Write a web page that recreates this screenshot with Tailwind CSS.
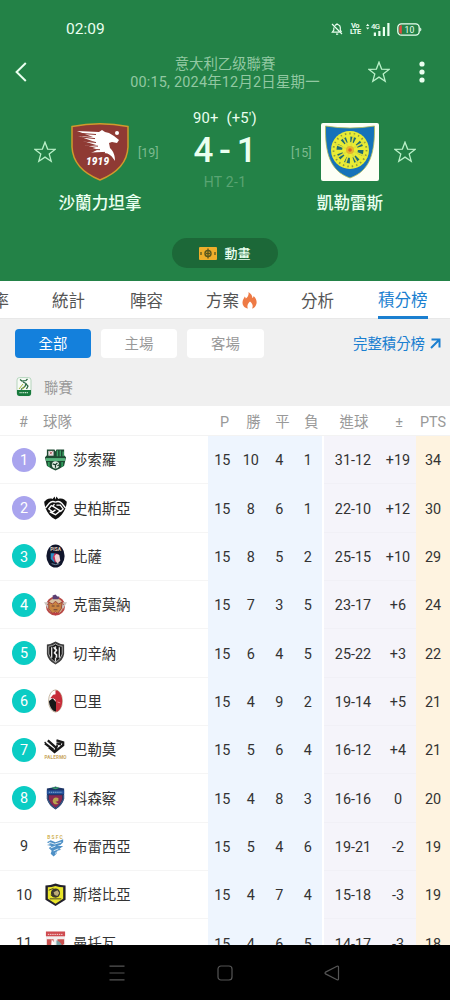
<!DOCTYPE html>
<html lang="zh-Hant">
<head>
    <meta charset="UTF-8">
    <meta name="viewport" content="width=device-width, initial-scale=1.0">
    <title>積分榜</title>
    <script src="https://cdn.jsdelivr.net/npm/@tailwindcss/browser@4"></script>
</head>
<body class="w-[450px] h-[1000px] overflow-hidden flex flex-col bg-white text-[#333] font-[Roboto,'Noto_Sans_CJK_TC',sans-serif]">

    <!-- Match header -->
    <header class="h-[281px] shrink-0 bg-[#238247] text-[#eafff0] flex flex-col">
        <div class="h-[58px] shrink-0 flex items-center pl-[66px] pr-[28px]">
            <span class="text-[15.5px] leading-none pt-0.5">02:09</span>
            <div class="ml-auto flex items-center">
                <svg class="w-3 h-3.5 mr-[7px]" viewBox="0 0 12 14" fill="none" stroke="currentColor" stroke-width="1.2">
                    <path d="M4 3.6A3 3 0 0 1 9.3 5.6V8l1.2 2M2.8 5.4V8L1.3 10.2H8.5M5 12.2h2.2M6 1.2v1.3M1 2l10 10"/>
                </svg>
                <div class="w-[10px] mr-1.5 text-[7.5px] leading-[6.5px] font-bold text-center tracking-tighter"><div>Vo</div><div>LTE</div></div>
                <svg class="w-[24px] h-[13px] mr-[7px]" viewBox="0 0 24 13" fill="currentColor">
                    <path d="M0 3l1.7-2.3L3.4 3zM0 4.5h3.4L1.7 6.6z"/>
                    <text x="5" y="6.4" font-size="7.8" font-weight="500" textLength="9">4G</text>
                    <path d="M7.8 9.5h2.2v3.5H7.8zM12.3 8h2.2v5h-2.2zM16.8 4h2.2v9h-2.2zM21.3 0h2.2v13h-2.2z"/>
                </svg>
                <svg class="w-[25px] h-[13px]" viewBox="0 0 25 13">
                    <rect x=".8" y=".8" width="21.4" height="11.4" rx="3.6" fill="none" stroke="currentColor" stroke-width="1.3"/>
                    <path d="M4.8 2.2v8.6h-.6a2 2 0 0 1-2-2V4.2a2 2 0 0 1 2-2z" fill="#e0483e"/>
                    <path d="M23.2 4.500c1.6.6 1.6 3.400 0 4z" fill="currentColor"/>
                    <text x="7.6" y="9.600" font-size="8.600" fill="currentColor">10</text>
                </svg>
            </div>
        </div>

        <div class="h-[28px] shrink-0 flex items-center px-[15px]">
            <svg class="w-3 h-5" viewBox="0 0 12 20" fill="none" stroke="currentColor" stroke-width="2"><path d="M10.8 1L1.6 10l9.200 9"/></svg>
            <div class="flex-1 pl-[55px] pt-[3px] text-center text-[14.4px] leading-[17.5px] text-[#92c8a2]">
                <div>意大利乙级聯賽</div>
                <div class="tracking-[0.22px] whitespace-nowrap">00:15, 2024年12月2日星期一</div>
            </div>
            <svg class="w-[22px] h-[22px]" viewBox="0 0 22 22" fill="none" stroke="#b9f0c8" stroke-width="1.3"><path d="M11 1.2l2.6 6.900 7.400.3-5.800 4.600 2 7.200L11 16.100l-6.200 4.100 2-7.200L1 8.400l7.400-.3z"/></svg>
            <svg class="w-1.5 h-[22px] ml-[29px] mr-[10px]" viewBox="0 0 6 22" fill="currentColor"><circle cx="3" cy="3" r="2.6"/><circle cx="3" cy="11" r="2.6"/><circle cx="3" cy="19" r="2.6"/></svg>
        </div>

        <div class="h-[152px] shrink-0 flex items-start pt-[20px]">
            <svg class="w-[22px] h-[22px] ml-[34px] mt-[35px]" viewBox="0 0 22 22" fill="none" stroke="#b9f0c8" stroke-width="1.3"><path d="M11 1.2l2.6 6.900 7.400.3-5.800 4.600 2 7.200L11 16.100l-6.200 4.100 2-7.200L1 8.400l7.400-.3z"/></svg>
            <div class="w-[58px] ml-[15px] mt-[17px] flex flex-col items-center">
                <svg class="w-[58px] h-[58px]" viewBox="0 0 58 58">
                    <path d="M1 3.5Q29-2 57 3.5V24Q56 46 29 57Q2 46 1 24z" fill="#8f3a34" stroke="#d09a2c" stroke-width="1.5"/>
                    <path d="M6 8l22 1 3-2 3 2 4 1 5 3 5 4-2 3-5-1-3 1 1 5c4 4 5 8 5 13-3-5-6-8-11-8H20l6-3H18l7-2-11-3 11 0-13-4 12 1-14-5 14 2L7 13l15 1L6 8z" fill="#fff"/>
                    <path d="M8 10.3l17 1.2M10 14l14 1.6M12 18l13 1.5M15 22.2l12 1M18 26.3l11 .4M20 30l14-.6" stroke="#8f3a34" stroke-width="1"/>
                    <circle cx="46" cy="10" r="2" fill="#fff"/>
                    <text x="15" y="42" font-size="10" font-weight="900" font-style="italic" fill="#fff" textLength="23">1919</text>
                </svg>
                <div class="mt-[11px] whitespace-nowrap text-[16.6px] leading-[24px] font-medium">沙蘭力坦拿</div>
            </div>
            <div class="w-[21px] ml-[9px] mt-[37px] text-[12.5px] leading-5 text-[#7dba8f]">[19]</div>
            <div class="w-[132px] text-center">
                <div class="text-[14.8px] leading-5 mt-[2px] whitespace-pre tracking-[0.2px]">90+  (+5')</div>
                <div class="text-[35px] leading-[40px] mt-[3px] font-medium [word-spacing:-3px]">4 - 1</div>
                <div class="text-[14px] leading-5 mt-[1px] tracking-[0.3px] text-[#5aa473]">HT 2-1</div>
            </div>
            <div class="w-[21px] mt-[37px] text-[12.5px] leading-5 text-[#7dba8f]">[15]</div>
            <div class="w-[58px] ml-[9px] mt-[17px] flex flex-col items-center">
                <svg class="w-[58px] h-[58px]" viewBox="0 0 58 58">
                    <rect width="58" height="58" rx="2" fill="#fdfff6"/>
                    <path d="M4.500 3Q29 7 53.500 3C54 30 49 48 29 55C9 48 4 30 4.500 3z" fill="#1672b9" stroke="#b5bd58" stroke-width=".8"/>
                    <circle cx="29" cy="27" r="19" fill="#e9ec35"/>
                    <circle cx="29" cy="27" r="16.500" fill="none" stroke="#8b9a3d" stroke-width="1.800" stroke-dasharray="1.500 3"/>
                    <circle cx="29" cy="27" r="10.500" fill="none" stroke="#1f6b75" stroke-width="6" stroke-dasharray="4.700 3.547"/>
                    <circle cx="29" cy="27" r="7" fill="none" stroke="#e9ec35" stroke-width="1.500"/>
                    <path d="M29 27L33 11M29 27l14-8M29 27l15 6M29 27l8 14M29 27l-5 15M29 27l-14 8M29 27l-15-6M29 27l-8-14" stroke="#dfe03a" stroke-width="1.600"/>
                    <circle cx="29" cy="27" r="4" fill="#e6b52c"/><circle cx="29" cy="27" r="1.800" fill="#d8632d"/>
                </svg>
                <div class="mt-[11px] whitespace-nowrap text-[16.6px] leading-[24px] font-medium">凱勒雷斯</div>
            </div>
            <svg class="w-[22px] h-[22px] ml-[15px] mt-[35px]" viewBox="0 0 22 22" fill="none" stroke="#b9f0c8" stroke-width="1.3"><path d="M11 1.2l2.6 6.900 7.400.3-5.800 4.600 2 7.200L11 16.100l-6.200 4.100 2-7.200L1 8.400l7.400-.3z"/></svg>
        </div>

        <button class="w-[106px] h-[30px] mx-auto rounded-full bg-[#1c6838] flex items-center justify-center gap-[7px] text-[13px] font-medium">
            <svg class="w-[18px] h-[13px]" viewBox="0 0 18 13"><rect width="18" height="13" rx="1" fill="#efae2b"/><circle cx="9" cy="6.500" r="3" fill="none" stroke="#59571d" stroke-width="1.400"/><path d="M9 1.500v10M2 5v3M16 5v3M7 6.500h4" stroke="#59571d" stroke-width="1.300"/></svg>
            <span class="pt-0.5">動畫</span>
        </button>
    </header>

    <!-- Tabs -->
    <nav class="h-[38px] shrink-0 flex items-center text-[16.5px] whitespace-nowrap text-[#555] border-b border-[#e8e8e8]">
        <span class="w-[9px] pt-[5px] flex justify-end">率</span>
        <span class="ml-[43px] pt-[5px]">統計</span>
        <span class="ml-[45px] pt-[5px]">陣容</span>
        <span class="ml-[43px] pt-[5px] flex items-center">方案
            <svg class="w-[15px] h-[17px] ml-[3px] mb-1" viewBox="0 0 15 17"><path d="M6.500 0c3 2 4 4 3.800 6 .9-.3 1.200-1 1.200-2C14 6 15 9 14.500 11.500c-.6 3-2.500 4.700-4.500 5 1.500-2.500.5-5-2-7-2 2-3.500 4.500-2 7C2.500 16 .5 13.500.5 10.500.5 8 2 6.500 2.700 4.500c.7.6 1 1.200 1.100 2C6 5 7 2.500 6.500 0z" fill="#ee7a45"/></svg>
        </span>
        <span class="ml-[44px] pt-[5px]">分析</span>
        <span class="ml-[44px] h-[38px] flex items-center text-[#1b7fd0] border-b-3 border-[#1b7fd0] pt-[7px]">積分榜</span>
    </nav>

    <!-- Filters and league name -->
    <section class="h-[87px] shrink-0 bg-[#f0f0f0] text-[14.4px]">
        <div class="flex items-center pt-[10px] pl-[15px] pr-[9px] gap-[10px]">
            <button class="w-[76px] h-[29px] pt-[3px] rounded-[4px] bg-[#1480dc] text-white">全部</button>
            <button class="w-[76px] h-[29px] pt-[3px] rounded-[4px] bg-white text-[#999]">主場</button>
            <button class="w-[77px] h-[29px] pt-[3px] rounded-[4px] bg-white text-[#999]">客場</button>
            <a class="ml-auto flex items-center gap-[5px] text-[#1b7fd0]"><span class="pt-[3px]">完整積分榜</span>
                <svg class="w-[11px] h-[11px]" viewBox="0 0 11 11" fill="none" stroke="currentColor" stroke-width="2"><path d="M1.500 1.500h8v8M9.500 1.500l-8.500 8.500"/></svg>
            </a>
        </div>
        <div class="flex items-center h-[30px] mt-[14px] pl-[16px] text-[#999]">
            <svg class="w-4 h-5 mr-[12px]" viewBox="0 0 16 20">
                <rect x="1" y=".6" width="14" height="18" rx="2.500" fill="#f7fbf5" stroke="#a6cdb0" stroke-width=".8"/>
                <path d="M4 2.500l2 1.500 4-.5 1.500-1.500M7 5l3 1.500-1 3-4 3M10 7l2 2-1.500 3" fill="none" stroke="#28663f" stroke-width="1.200"/>
                <path d="M3 12l4-5M6 12l3-2" stroke="#a6b83f" stroke-width="1"/>
                <path d="M1 13h14v4q0 1.500-2 2H3q-2-.5-2-2z" fill="#187a3d"/><path d="M3.500 15.600h9" stroke="#c8e6ce" stroke-width="1.200" stroke-dasharray="1.200 .6"/>
            </svg>
            <span class="pt-1">聯賽</span>
        </div>
    </section>

    <!-- Standings -->
    <main class="flex-1 min-h-0 overflow-hidden">
        <div class="h-[30px] pt-1 grid grid-cols-[43px_167px_29px_29px_29px_29px_56px_34px_34px] items-center text-center text-[14.4px] text-[#999] border-b border-[#f3f3f3]">
            <span class="pl-1">#</span><span class="text-left">球隊</span><span>P</span><span>勝</span><span>平</span><span>負</span><span>進球</span><span>±</span><span>PTS</span>
        </div>
        <div id="rows"></div>
    </main>

    <!-- System navigation -->
    <footer class="h-[55px] shrink-0 bg-black flex items-center text-[#555]">
        <svg class="w-4 h-4 ml-[109px]" viewBox="0 0 16 16" stroke="currentColor" stroke-width="1.200"><path d="M.5 1.200h15M.5 8h15M.5 14.800h15"/></svg>
        <svg class="w-4 h-4 ml-[92px]" viewBox="0 0 16 16" fill="none" stroke="currentColor" stroke-width="1.200"><rect x="1" y="1" width="14" height="14" rx="3"/></svg>
        <svg class="w-4 h-4 ml-[91px]" viewBox="0 0 16 16" fill="none" stroke="currentColor" stroke-width="1.200"><path d="M1.500 7.100L13 1.200q1.500-.5 1.500 1v11.600q0 1.500-1.500 1L1.500 8.900q-1-.9 0-1.800z"/></svg>
    </footer>

    <script>
        const crests = {
            sassuolo: '<path d="M3 1h8l1 2 1-2h8v6l2 2-2 9-5 3-4 2-4-2-5-3L1 9l2-2z" fill="#1d4a32"/><path d="M4.500 2.500h5.500v5H4.500z" fill="#e9dfe2"/><path d="M6 3l2 3M9 3L6 6" stroke="#a55" stroke-width=".8"/><path d="M14 2v6M17 2v6M20 3v5" stroke="#3da066" stroke-width="1.500"/><path d="M2 10h20v3H2z" fill="#58b67e"/><path d="M5 14v5M19 14v5" stroke="#2f9a5a" stroke-width="2"/><circle cx="12" cy="17" r="3.800" fill="#e4efe6"/><path d="M9 16l3 1 2-2M12 17v3M14 18l2-1" stroke="#16382a" stroke-width="1.300" fill="none"/>',
            spezia: '<path d="M12 3l1-3 2 2.500c4-1.500 7 1 8.800 3C23 14 19 20.500 12 24 5 20.500 1 14 .2 5.500 2 3.500 5 1 9 2.500L11 0z" fill="#111"/><path d="M1.500 12l4-5q3-3 6.500-1M22.500 12l-4-5q-3-3-6.500-1M8 9l-3 4 4 3 3-2M11 8l-2 2 8 5-5 4-6-3M13 9h4l3 4-3 3" fill="none" stroke="#fff" stroke-width="1.400"/>',
            pisa: '<ellipse cx="12" cy="12" rx="9.500" ry="12" fill="#10152b"/><text x="6.500" y="7" font-size="5" font-weight="bold" fill="#e8d9c0">PISA</text><path d="M7 9h4v10L7 15z" fill="#2a8ec5"/><path d="M11 9l4 1 1 4-4 5-3-5z" fill="#c9305c"/><path d="M11 12l2-2 3 1 1 6-3 3-2-3z" fill="#efd0d4"/><path d="M8 20q4 2 8 0" stroke="#73899e" fill="none"/>',
            cremonese: '<circle cx="12" cy="13" r="9" fill="#d9c0a0" stroke="#b94b48" stroke-width="2"/><path d="M0 9l5 0-2 3 3 0-2 4zM24 9l-5 0 2 3-3 0 2 4z" fill="#c9c3bd"/><path d="M5 9l4 2 3-3 3 3 4-2-1 7-4 5-2-2-3 2-4-5z" fill="#c98442" stroke="#994238" stroke-width="1"/><path d="M9 2l3-1 2 2 2 0-1 3H9z" fill="#5b3f73"/><path d="M8 13h3M13 13h3M10 17h4" stroke="#694037" stroke-width="1.200"/><path d="M8 20l4 3 4-3z" fill="#bf3d43"/>',
            cesena: '<path d="M3 3q4 0 9-3 5 3 9 3v10q-1 7-9 11-8-4-9-11z" fill="#3d3d3d"/><path d="M5 5q4 0 7-2.500 3 2.500 7 2.500v8q-1 5-7 9-6-4-7-9z" fill="#151515" stroke="#ccc" stroke-width=".8"/><path d="M8 6v11M16 6v11M12 5v4M12 17v4" stroke="#ddd" stroke-width="1.400"/><path d="M10 6l3 3-2 3 2 2 0 3" fill="none" stroke="#f1f1f1" stroke-width="1.700"/>',
            bari: '<ellipse cx="12" cy="12" rx="7.200" ry="11.600" fill="#fff" stroke="#b4a083" stroke-width=".8"/><path d="M12 .8C17 1 19 7 19 12s-2 11-7 11.200z" fill="#c62d39"/><path d="M5.200 12l3.800-3 3.500 4v10C8 23 5.200 16 5.200 12z" fill="#171717"/><path d="M6.500 9l3-3.500 3-.5v6l-3-2z" fill="#c62d39"/><path d="M14 13l3 1" stroke="#e98d92"/>',
            palermo: '<path d="M1 5l9 7M4 2l9 8M1 5l1-1M13 2l7 2 0 3-9 7-6-5M13 5l5 1" fill="none" stroke="#191919" stroke-width="2.400"/><path d="M11 14l3-7" stroke="#191919" stroke-width="2"/><text x=".5" y="21.500" font-size="4.800" font-weight="bold" fill="#c8a55c" textLength="23">PALERMO</text>',
            como: '<path d="M3 2l6-1 3-1 3 1 6 1v11q-2 7-9 11-7-4-9-11z" fill="#1d3566"/><path d="M5 9h14v4q-2 6-7 9-5-3-7-9z" fill="#8a2a50"/><path d="M3 4h18v4H3z" fill="#244f99"/><path d="M5 6h14" stroke="#8bb5d8" stroke-dasharray="1.500 .7"/><path d="M15 12q-5-2-6 3 1 5 6 3l-3-2 3-1z" fill="#b9a54f"/><path d="M9 1l3 1 3-1" stroke="#3ba06b" stroke-width="1.500" fill="none"/><path d="M3.500 9v4q2 6 8.500 10 6.500-4 8.500-10V9" fill="none" stroke="#42638d"/>',
            brescia: '<text x="3.500" y="5" font-size="5" font-weight="bold" fill="#d2b45a" textLength="16">BSFC</text><path d="M3 8l4-2 5 2 8-3v3l-3 3-3 1 6 0-4 3 2 1-4 1-1 3-3 3-3-3 1-3-3-3 3-2-5-1 4-1z" fill="#4e90c6"/><path d="M5 8l6 2 7-2M7 14l5-2M10 17l5-2M12 20l1-2" stroke="#e2eff8" stroke-width="1" fill="none"/>',
            stabia: '<path d="M1.500 2q5 0 10.500-2 5.500 2 10.500 2v15L12 23.500 1.500 17z" fill="#23212c"/><path d="M4 4q4 0 8-1.500Q16 4 20 4v12l-8 5-8-5z" fill="#e9e52b"/><circle cx="12" cy="10" r="4.800" fill="#3b382d"/><path d="M10 9l4-2 2 3-2 3-3-1z" fill="#bdac78"/><path d="M5 7l5-2M7 12l3 2M6 16h12" stroke="#4a462a" stroke-width="1"/>',
            mantova: '<path d="M2 0h20v24H2z" fill="#f3eeee"/><path d="M2 0h20v5H2z" fill="#cf4b50"/><path d="M4 3h16" stroke="#f6d9d9" stroke-dasharray="1.500 .8"/><path d="M3 8h7v12H3zM14 8h7v5l-7 5z" fill="#c9514f"/><path d="M8 8l3 4v10H7z" fill="#fff"/><path d="M13 9q4 1 6 6v9h-6z" fill="#7aa2a5"/>'
        };

        const teams = [
            ['莎索羅', 'sassuolo', 15, 10, 4, 1, '31-12', '+19', 34],
            ['史柏斯亞', 'spezia', 15, 8, 6, 1, '22-10', '+12', 30],
            ['比薩', 'pisa', 15, 8, 5, 2, '25-15', '+10', 29],
            ['克雷莫納', 'cremonese', 15, 7, 3, 5, '23-17', '+6', 24],
            ['切辛納', 'cesena', 15, 6, 4, 5, '25-22', '+3', 22],
            ['巴里', 'bari', 15, 4, 9, 2, '19-14', '+5', 21],
            ['巴勒莫', 'palermo', 15, 5, 6, 4, '16-12', '+4', 21],
            ['科森察', 'como', 15, 4, 8, 3, '16-16', '0', 20],
            ['布雷西亞', 'brescia', 15, 5, 4, 6, '19-21', '-2', 19],
            ['斯塔比亞', 'stabia', 15, 4, 7, 4, '15-18', '-3', 19],
            ['曼托瓦', 'mantova', 15, 4, 6, 5, '14-17', '-3', 18]
        ];

        function rankColor(rank) {
            if (rank <= 2) return 'bg-[#a9a4ee] text-white';
            if (rank <= 8) return 'bg-[#0bccc4] text-white';
            return 'text-[#333]';
        }

        document.getElementById('rows').innerHTML = teams.map(([name, crest, p, w, d, l, goals, diff, pts], i) => `
            <div class="h-[48.33px] flex text-[14.4px] text-center text-[#333]">
                <div class="w-[208px] flex items-center border-b border-[#f5f5f5]">
                    <span class="w-6 h-6 ml-3 pt-0.5 rounded-full flex items-center justify-center ${rankColor(i + 1)}">${i + 1}</span>
                    <svg class="w-[23px] h-6 ml-2 mr-1.5" viewBox="0 0 24 24">${crests[crest]}</svg>
                    <span class="pt-[3px]">${name}</span>
                </div>
                <div class="w-[114px] pt-0.5 grid grid-cols-4 items-center bg-[#eef5fe]"><span>${p}</span><span>${w}</span><span>${d}</span><span>${l}</span></div>
                <div class="w-[92px] pt-[3px] ml-0.5 grid grid-cols-[58px_32px] items-center bg-[#f5f4fa] border-b border-[#f1f0f6]"><span>${goals}</span><span>${diff}</span></div>
                <div class="w-[34px] pt-0.5 flex items-center justify-center bg-[#fef3e0]">${pts}</div>
            </div>`).join('');
    </script>
</body>
</html>
